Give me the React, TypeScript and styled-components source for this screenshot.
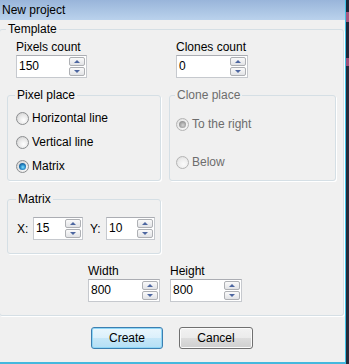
import styled, { createGlobalStyle } from 'styled-components';

const GlobalStyle = createGlobalStyle`
  html, body {
    margin: 0;
    padding: 0;
    background: #262a3a;
  }

  body {
    font-family: 'Liberation Sans', Arial, sans-serif;
    font-size: 12px;
    color: #000;
  }
`;

const SpinBox = ({ value, width }: { value: string; width: number }) => (
  <SpinFrame $width={width}>
    <SpinValue>{value}</SpinValue>
    <SpinButtons>
      <SpinButton type="button">
        <Arrow $dir="up" />
      </SpinButton>
      <SpinButton type="button">
        <Arrow $dir="down" />
      </SpinButton>
    </SpinButtons>
  </SpinFrame>
);

const Radio = ({
  label,
  checked,
  disabled,
}: {
  label: string;
  checked?: boolean;
  disabled?: boolean;
}) => (
  <RadioRow $disabled={disabled}>
    <RadioMark $checked={checked} $disabled={disabled} />
    <span>{label}</span>
  </RadioRow>
);

const App = () => {
  return (
    <Screen>
      <GlobalStyle />
      <Window>
        <TitleBar>New project</TitleBar>
        <Body>
          <Template>
            <legend>Template</legend>

            <CountRow>
              <Field $indent={9}>
                <FieldLabel>Pixels count</FieldLabel>
                <SpinBox value="150" width={71} />
              </Field>
              <Field $indent={7}>
                <FieldLabel>Clones count</FieldLabel>
                <SpinBox value="0" width={72} />
              </Field>
            </CountRow>

            <PlaceRow>
              <GroupBox $indent={8}>
                <legend>Pixel place</legend>
                <RadioList>
                  <Radio label="Horizontal line" />
                  <Radio label="Vertical line" />
                  <Radio label="Matrix" checked />
                </RadioList>
              </GroupBox>
              <GroupBox $indent={6} $disabled>
                <legend>Clone place</legend>
                <SparseRadioList>
                  <Radio label="To the right" checked disabled />
                  <Radio label="Below" disabled />
                </SparseRadioList>
              </GroupBox>
            </PlaceRow>

            <MatrixRow>
              <MatrixBox $indent={9}>
                <legend>Matrix</legend>
                <AxisRow>
                  <AxisPair>
                    <AxisLabel>X:</AxisLabel>
                    <SpinBox value="15" width={50} />
                  </AxisPair>
                  <AxisPair>
                    <AxisLabel>Y:</AxisLabel>
                    <SpinBox value="10" width={49} />
                  </AxisPair>
                </AxisRow>
              </MatrixBox>
            </MatrixRow>

            <SizeRow>
              <Field>
                <FieldLabel>Width</FieldLabel>
                <SpinBox value="800" width={72} />
              </Field>
              <Field>
                <FieldLabel>Height</FieldLabel>
                <SpinBox value="800" width={72} />
              </Field>
            </SizeRow>
          </Template>

          <ButtonRow>
            <DialogButton $primary>Create</DialogButton>
            <DialogButton>Cancel</DialogButton>
          </ButtonRow>
        </Body>
      </Window>
      <DesktopEdge />
    </Screen>
  );
};

export default App;

const Screen = styled.div`
  display: flex;
  width: 349px;
  height: 364px;
  overflow: hidden;
`;

const Window = styled.div`
  width: 346px;
  height: 364px;
  box-sizing: border-box;
  display: flex;
  flex-direction: column;
  background: #f0f0f0;
  border-right: 1px solid #3fc2e6;
  border-bottom: 2px solid #44b8de;
`;

const DesktopEdge = styled.div`
  width: 3px;
  height: 364px;
  background: linear-gradient(
    #1d2738 0,
    #1d2738 12px,
    #a8577f 12px,
    #a8577f 22px,
    #202638 22px,
    #202638 58px,
    #9a4f78 58px,
    #9a4f78 66px,
    #262a3a 66px
  );
`;

const TitleBar = styled.div`
  height: 20px;
  line-height: 20px;
  padding-left: 2px;
  font-size: 12px;
  color: #000;
  background: linear-gradient(#99b5da, #bad2ec);
`;

const Body = styled.div`
  flex: 1;
  display: flex;
  flex-direction: column;
`;

const Template = styled.fieldset`
  margin: 2px 0 0 -1px;
  width: 345px;
  box-sizing: border-box;
  padding: 4px 7px 13px;
  border: 1px solid #d5dfe5;
  border-radius: 3px;
  box-shadow: 1px 1px 0 #fff;
  display: flex;
  flex-direction: column;

  legend {
    padding: 0 2px;
    margin-left: -1px;
    line-height: 14px;
  }
`;

const CountRow = styled.div`
  display: grid;
  grid-template-columns: 154px 167px;
  column-gap: 8px;
`;

const Field = styled.div<{ $indent?: number }>`
  display: flex;
  flex-direction: column;
  padding-left: ${p => p.$indent ?? 0}px;
`;

const FieldLabel = styled.div`
  line-height: 14px;
  margin-bottom: 1px;
`;

const SpinFrame = styled.div<{ $width: number }>`
  width: ${p => p.$width}px;
  height: 23px;
  box-sizing: border-box;
  display: flex;
  padding: 1px;
  background: #fff;
  border: 1px solid #c6c9ce;
  border-top-color: #abadb3;
`;

const SpinValue = styled.div`
  flex: 1;
  line-height: 19px;
  padding-left: 1px;
`;

const SpinButtons = styled.div`
  display: flex;
  flex-direction: column;
  gap: 1px;
  width: 16px;
`;

const SpinButton = styled.button`
  height: 9px;
  padding: 0;
  box-sizing: border-box;
  display: flex;
  align-items: center;
  justify-content: center;
  border: 1px solid #aeb0b4;
  border-radius: 2px;
  background: linear-gradient(#fafafa, #e2e3e6);
`;

const Arrow = styled.span<{ $dir: 'up' | 'down' }>`
  width: 0;
  height: 0;
  border-left: 3px solid transparent;
  border-right: 3px solid transparent;
  ${p =>
    p.$dir === 'up'
      ? 'border-bottom: 3px solid #4d66a0;'
      : 'border-top: 3px solid #4d66a0;'}
`;

const PlaceRow = styled.div`
  display: grid;
  grid-template-columns: 154px 167px;
  column-gap: 8px;
  margin-top: 10px;
`;

const GroupBox = styled.fieldset<{ $indent: number; $disabled?: boolean }>`
  margin: 0;
  min-width: 0;
  padding: 4px ${p => p.$indent}px 2px;
  border: 1px solid #d5dfe5;
  border-radius: 3px;
  box-shadow: 1px 1px 0 #fff;
  color: ${p => (p.$disabled ? '#6d6d6d' : '#000')};

  legend {
    padding: 0 2px;
    margin-left: -1px;
    line-height: 14px;
  }
`;

const RadioList = styled.div`
  display: flex;
  flex-direction: column;
`;

const SparseRadioList = styled.div`
  display: flex;
  flex-direction: column;
  gap: 14px;
  padding-top: 6px;
`;

const RadioRow = styled.label<{ $disabled?: boolean }>`
  display: flex;
  align-items: center;
  height: 24px;
  color: ${p => (p.$disabled ? '#6d6d6d' : '#000')};
`;

const RadioMark = styled.span<{ $checked?: boolean; $disabled?: boolean }>`
  width: 13px;
  height: 13px;
  box-sizing: border-box;
  margin-right: 3px;
  border-radius: 50%;
  display: flex;
  align-items: center;
  justify-content: center;
  border: 1px solid ${p => (p.$disabled ? '#b4b4b4' : '#8c8e90')};
  background: ${p =>
    p.$disabled
      ? 'radial-gradient(circle at 60% 65%, #fbfbfb 0%, #ececec 55%, #d6d6d6 100%)'
      : 'radial-gradient(circle at 60% 65%, #ffffff 0%, #e8e8e8 50%, #c8c8c8 100%)'};

  &::after {
    content: '';
    display: ${p => (p.$checked ? 'block' : 'none')};
    width: 7px;
    height: 7px;
    border-radius: 50%;
    background: ${p =>
      p.$disabled
        ? 'radial-gradient(circle at 55% 60%, #d2d2d2 0%, #9a9a9a 60%, #7a7a7a 100%)'
        : 'radial-gradient(circle at 55% 60%, #7fe0ff 0%, #2384c4 45%, #0e3766 100%)'};
  }
`;

const MatrixRow = styled.div`
  display: grid;
  grid-template-columns: 154px;
  margin-top: 11px;
`;

const MatrixBox = styled(GroupBox)`
  padding-top: 11px;
  padding-bottom: 13px;
`;

const AxisRow = styled.div`
  display: flex;
  gap: 7px;
`;

const AxisPair = styled.div`
  display: flex;
  align-items: center;
`;

const AxisLabel = styled.span`
  width: 16px;
`;

const SizeRow = styled.div`
  display: flex;
  gap: 10px;
  margin-top: 10px;
  padding-left: 81px;
`;

const ButtonRow = styled.div`
  display: flex;
  justify-content: center;
  gap: 16px;
  margin-top: 11px;
  padding-right: 1px;
`;

const DialogButton = styled.button<{ $primary?: boolean }>`
  width: ${p => (p.$primary ? 72 : 74)}px;
  height: 22px;
  padding: 0;
  font-family: 'Liberation Sans', Arial, sans-serif;
  font-size: 12px;
  color: #000;
  border-radius: 3px;
  border: 1px solid ${p => (p.$primary ? '#3c7fb1' : '#707070')};
  background: ${p =>
    p.$primary
      ? 'linear-gradient(#e9f6fd 0%, #dbf0fb 50%, #c6e7f8 50%, #b5dff5 100%)'
      : 'linear-gradient(#f2f2f2 0%, #ebebeb 50%, #dddddd 50%, #cfcfcf 100%)'};
  box-shadow: inset 0 0 0 1px ${p => (p.$primary ? '#8fd6f6' : '#fbfbfb')};
`;
